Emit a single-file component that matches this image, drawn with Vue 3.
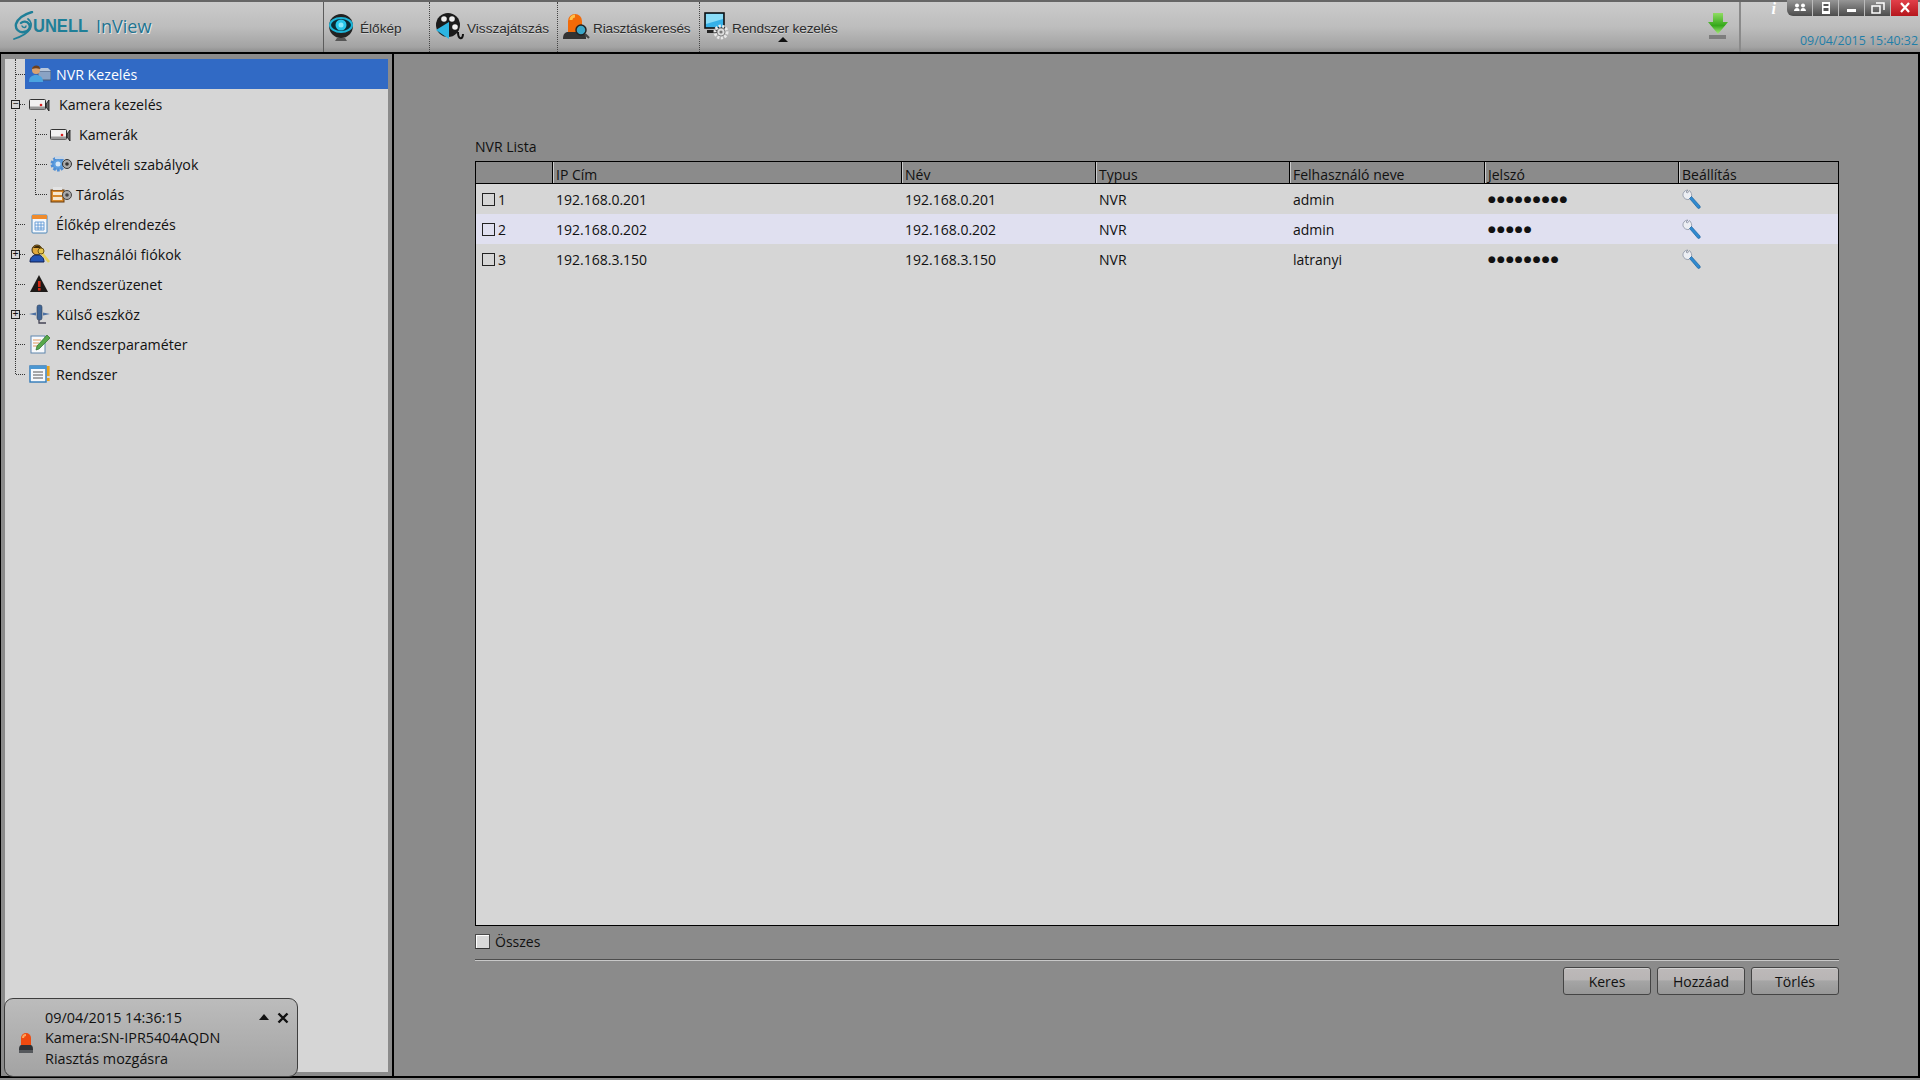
<template>
  <div class="app">
    <header class="topbar">
      <div class="brand">
        <svg class="spiral" viewBox="0 0 22 30" width="22" height="30">
          <g fill="none" stroke="#1f7f98" stroke-linecap="round">
            <path d="M19 1C12 3 5 7 3 13c-1 5 3 9 8 8 5-1 7-5 5-8-2-3-6-3-8-1" stroke-width="2.400"/>
            <path d="M1 28c6-2 13-5 16-10 2-4 1-8-2-10" stroke-width="1.800"/>
            <path d="M9 15c1 2 4 2 4 0" stroke-width="1.400"/>
          </g>
        </svg>
        <span class="unell">UNELL</span>
        <span class="inview">InView</span>
      </div>
      <nav class="nav">
        <div v-for="item in navItems" :key="item.label" class="nav-item" :class="item.cls">
          <svg class="nav-icon" :width="item.w" height="32" :viewBox="`0 0 ${item.w} 32`" v-html="icons[item.icon]"></svg>
          <span>{{ item.label }}</span>
          <i v-if="item.caret" class="nav-caret"></i>
        </div>
      </nav>
      <div class="update">
        <svg width="20" height="27" viewBox="0 0 20 27">
          <defs>
            <linearGradient id="arrow" x1="0" y1="0" x2="0" y2="1">
              <stop offset="0" stop-color="#8fdc62"/>
              <stop offset=".6" stop-color="#35a81a"/>
              <stop offset="1" stop-color="#a6ea7a"/>
            </linearGradient>
          </defs>
          <path d="M5 0h10v9h5L10 21 0 9h5z" fill="url(#arrow)"/>
          <rect x="1" y="22" width="17" height="4" fill="#7d7d7d"/>
        </svg>
      </div>
      <div class="status">
        <div class="window-row">
          <span class="info">i</span>
          <div class="window-btns">
            <button v-for="b in windowBtns" :key="b" class="win-btn" :class="{ close: b === 'close' }">
              <svg width="14" height="12" viewBox="0 0 14 12" v-html="icons[b]"></svg>
            </button>
          </div>
        </div>
        <div class="clock">09/04/2015 15:40:32</div>
      </div>
    </header>

    <div class="body">
      <aside class="side">
        <ul class="tree">
          <li v-for="(row, i) in tree" :key="row.label" class="tree-row" :class="[`lvl${row.level}`, { first: i === 0, last: i === tree.length - 1, sub: row.sub, sublast: row.subLast }]">
            <span v-if="row.expander" class="expander">{{ row.expander }}</span>
            <div class="tree-item" :class="{ selected: row.selected }">
              <svg class="tree-icon" width="22" height="22" viewBox="0 0 22 22" v-html="icons[row.icon]"></svg>
              <span class="tree-label" :style="{ marginLeft: row.gap + 'px' }">{{ row.label }}</span>
            </div>
          </li>
        </ul>
      </aside>

      <main class="main">
        <div class="list-title">NVR Lista</div>
        <div class="table">
          <div class="grid head">
            <div v-for="c in columns" :key="c" class="th">{{ c }}</div>
          </div>
          <div v-for="(r, i) in rows" :key="r.ip" class="grid row" :class="{ alt: i === 1 }">
            <div class="td num"><i class="box"></i>{{ i + 1 }}</div>
            <div class="td">{{ r.ip }}</div>
            <div class="td">{{ r.ip }}</div>
            <div class="td">NVR</div>
            <div class="td">{{ r.user }}</div>
            <div class="td pass">{{ '●'.repeat(r.pass) }}</div>
            <div class="td">
              <svg width="20" height="21" viewBox="0 0 20 21" v-html="icons.wrench"></svg>
            </div>
          </div>
        </div>
        <label class="select-all"><i class="box-all"></i>Összes</label>
        <div class="actions">
          <button class="btn">Keres</button>
          <button class="btn">Hozzáad</button>
          <button class="btn">Törlés</button>
        </div>
      </main>
    </div>

    <div class="alert">
      <svg class="alert-icon" width="16" height="24" viewBox="0 0 16 24" v-html="icons.siren"></svg>
      <div class="alert-text">
        <div>09/04/2015 14:36:15</div>
        <div>Kamera:SN-IPR5404AQDN</div>
        <div>Riasztás mozgásra</div>
      </div>
      <i class="alert-caret"></i>
      <svg class="alert-close" width="12" height="12" viewBox="0 0 12 12">
        <path d="M1.5 1.5l9 9M10.5 1.5l-9 9" stroke="#111" stroke-width="2.4"/>
      </svg>
    </div>
  </div>
</template>

<script setup>
const navItems = [
  { label: 'Élőkép', icon: 'eye', w: 26, cls: 'n1' },
  { label: 'Visszajátszás', icon: 'film', w: 30, cls: 'n2' },
  { label: 'Riasztáskeresés', icon: 'alarm', w: 28, cls: 'n3' },
  { label: 'Rendszer kezelés', icon: 'monitor', w: 26, cls: 'n4', caret: true }
]

const windowBtns = ['users', 'save', 'min', 'restore', 'close']

const tree = [
  { label: 'NVR Kezelés', icon: 'nvr', level: 0, selected: true, gap: 5 },
  { label: 'Kamera kezelés', icon: 'cam', level: 0, expander: '−', gap: 8 },
  { label: 'Kamerák', icon: 'cam', level: 1, sub: true, gap: 7 },
  { label: 'Felvételi szabályok', icon: 'rule', level: 1, sub: true, gap: 4 },
  { label: 'Tárolás', icon: 'disk', level: 1, sub: true, subLast: true, gap: 4 },
  { label: 'Élőkép elrendezés', icon: 'layout', level: 0, gap: 5 },
  { label: 'Felhasználói fiókok', icon: 'users2', level: 0, expander: '+', gap: 5 },
  { label: 'Rendszerüzenet', icon: 'warn', level: 0, gap: 5 },
  { label: 'Külső eszköz', icon: 'plug', level: 0, expander: '+', gap: 5 },
  { label: 'Rendszerparaméter', icon: 'pencil', level: 0, gap: 5 },
  { label: 'Rendszer', icon: 'sys', level: 0, gap: 5 }
]

const columns = ['', 'IP Cím', 'Név', 'Typus', 'Felhasználó neve', 'Jelszó', 'Beállítás']

const rows = [
  { ip: '192.168.0.201', user: 'admin', pass: 9 },
  { ip: '192.168.0.202', user: 'admin', pass: 5 },
  { ip: '192.168.3.150', user: 'latranyi', pass: 8 }
]

const camera = `<rect x="0.500" y="6.500" width="16" height="10" rx="1" fill="#f1f1f1" stroke="#333"/><rect x="1" y="13.500" width="15" height="3" fill="#999"/><circle cx="12" cy="12" r="1.300" fill="#d81e1e"/><path d="M17 11l3-4v11l-3-4z" fill="#666" stroke="#111" stroke-width=".8"/>`

const icons = {
  eye: `<ellipse cx="13" cy="14" rx="12" ry="12" fill="#222"/><ellipse cx="13" cy="13" rx="11" ry="7" fill="#0b2a33" stroke="#1db4d8" stroke-width="2"/><circle cx="13" cy="13" r="5.500" fill="#28c6ea"/><circle cx="13" cy="13" r="2.500" fill="#8ae8fb"/><path d="M9 26h8l2 3H7z" fill="#555"/>`,
  film: `<circle cx="14" cy="13" r="12" fill="#1b1b1b"/><circle cx="10" cy="7" r="2.800" fill="#eee"/><circle cx="18" cy="7" r="2.800" fill="#eee"/><circle cx="21" cy="15" r="2.800" fill="#eee"/><path d="M2 18l13-8v17z" fill="#2db5e2"/><path d="M24 20c0 8 5 8 5 2" fill="none" stroke="#111" stroke-width="2"/>`,
  alarm: `<path d="M6 20V9a7 7 0 0 1 14 0v11z" fill="#f26a08"/><path d="M9 8a4 4 0 0 1 4-4" stroke="#ffc04a" stroke-width="3" fill="none"/><path d="M1 27c0-5 2-7 5-7h14c3 0 4 2 4 7z" fill="#333"/><circle cx="19" cy="18" r="5" fill="#3aa6c8" stroke="#222" stroke-width="1.500"/><path d="M23 22l4 4" stroke="#444" stroke-width="2.200"/>`,
  monitor: `<rect x="1" y="1" width="19" height="15" fill="#36b1e8" stroke="#111" stroke-width="1.600"/><path d="M2 2h17v5L2 12z" fill="#8adcf7"/><path d="M3 18h10v3H3z" fill="#222"/><circle cx="17" cy="20" r="6" fill="none" stroke="#e8e8e8" stroke-width="3" stroke-dasharray="2.200 1.400"/><circle cx="17" cy="20" r="4" fill="#ddd" stroke="#888"/><circle cx="17" cy="20" r="1.600" fill="#777"/>`,
  users: `<circle cx="4" cy="3.500" r="2" fill="#fff"/><circle cx="10" cy="3.500" r="2" fill="#fff"/><path d="M1 9c0-2 1.500-3 3-3s3 1 2.500 3zM7.500 9c0-2 1-3 2.500-3s3 1 3 3z" fill="#fff"/>`,
  save: `<path d="M3 0h8v12H3z" fill="#fff"/><path d="M4.500 2h5v2h-5zM4.500 6h5v3h-5z" fill="#555"/>`,
  min: `<rect x="2" y="7" width="9" height="3" fill="#fff"/>`,
  restore: `<path d="M1 4h8v7H1zM5 1h8v7" fill="none" stroke="#fff" stroke-width="1.500"/>`,
  close: `<path d="M3 1l8 9M11 1l-8 9" stroke="#fff" stroke-width="2.200"/>`,
  nvr: `<rect x="9" y="8" width="13" height="9" fill="#8aa3c4" stroke="#4a5d78"/><path d="M9 8l3-3h7l3 3z" fill="#b8c7db"/><circle cx="7" cy="7" r="4" fill="#d8a272"/><path d="M3 6c0-4 8-5 8 0-3-1-5-1-8 0z" fill="#6b3f1d"/><path d="M0 19c0-5 3-7 7-7s7 2 7 7z" fill="#4aa4e0"/>`,
  cam: camera,
  rule: `<circle cx="8" cy="11" r="6" fill="#5d9fe0" stroke="#4f8ed4" stroke-width="3" stroke-dasharray="2.500 1.300"/><circle cx="8" cy="11" r="2.500" fill="#d6e8f8"/><circle cx="17" cy="11" r="4.500" fill="#aaa" stroke="#333"/><circle cx="17" cy="11" r="1.800" fill="#333"/><path d="M5 3h9v3H5z" fill="#c8d4e2"/>`,
  disk: `<rect x="1" y="7" width="13" height="12" fill="#d8892a" stroke="#6b3c0c"/><rect x="3" y="9" width="9" height="3" fill="#f6e8d0"/><rect x="3" y="14" width="9" height="3" fill="#f6e8d0"/><circle cx="17" cy="12" r="4.500" fill="#aaa" stroke="#444"/><circle cx="17" cy="12" r="1.800" fill="#444"/><path d="M3 4h9v3H3z" fill="#e4e4e4"/>`,
  layout: `<rect x="3" y="2" width="15" height="18" rx="1" fill="#f4f7fb" stroke="#4d86b8"/><rect x="3" y="2" width="15" height="4" fill="#ef8b2c"/><path d="M6 9h9v8H6zM9 9v8M12 9v8M6 12h9M6 15h9" fill="none" stroke="#5f97d6" stroke-width=".9"/>`,
  users2: `<circle cx="8" cy="7" r="5" fill="#e0a83c" stroke="#3d2a08"/><path d="M4 5c2-3 7-3 8 0z" fill="#3d2a08"/><path d="M1 19c0-5 3-7 7-7s7 2 7 7z" fill="#2354b4" stroke="#0f1f52"/><path d="M12 9l8 10" stroke="#e6cf5a" stroke-width="2.600"/><circle cx="12" cy="8" r="3" fill="#e6c44c" stroke="#6b5312"/>`,
  warn: `<path d="M10 2l9 17H1z" fill="#1d1a18"/><rect x="9" y="8" width="2.600" height="6" fill="#d32a14"/><rect x="9" y="15" width="2.600" height="2.500" fill="#d32a14"/>`,
  plug: `<path d="M0 11l7-1.500v3zM14 9.500l7 1.500-7 1.500z" fill="#4d72a4"/><rect x="8" y="2" width="5" height="15" rx="2" fill="#3f6596" stroke="#2b3f5d" stroke-width=".6"/><path d="M10 17v3h7" fill="none" stroke="#445" stroke-width="1.300"/>`,
  pencil: `<rect x="2" y="3" width="14" height="17" fill="#f7f9fc" stroke="#5f86ad"/><path d="M4 7h8M4 10h6M4 13h5" stroke="#e39a5d" stroke-width="1.200"/><path d="M7 17l1-4L18 2l3 3L10 16z" fill="#57a84a" stroke="#2c6d2a" stroke-width=".7"/>`,
  sys: `<rect x="1" y="3" width="16" height="16" fill="#f6f9fc" stroke="#2f79b8" stroke-width="1.400"/><rect x="1" y="3" width="16" height="3" fill="#4b97d2"/><path d="M4 9h10M4 12h10M4 15h10" stroke="#555"/><rect x="18" y="3" width="2.600" height="10" fill="#e8a21c"/><rect x="18" y="15" width="2.600" height="3" fill="#e8a21c"/>`,
  wrench: `<path d="M6 1a5 5 0 0 0-5 6c1 2.500 3.500 4 6 3.500l2.500-2.500c.6-2.500-.2-4.500-2-6.500L5.500 4 4 3z" fill="#eceef3" stroke="#8b93a3" stroke-width=".8"/><path d="M7.500 9.500l2-2 8.500 9.500c1 1.500-.8 3.200-2.200 2.200z" fill="#2f8ad0" stroke="#155a96" stroke-width=".6"/>`,
  siren: `<path d="M3 13V6a5 5 0 0 1 10 0v7z" fill="#ee4a10"/><path d="M5 6a3 3 0 0 1 3-3" stroke="#ffa45a" stroke-width="2" fill="none"/><path d="M1 18c0-4 1-5 3-5h8c2 0 3 1 3 5z" fill="#2f3236"/><rect x="1" y="18" width="14" height="3" fill="#55585c"/>`
}
</script>

<style scoped>
.app {
  width: 1920px;
  height: 1080px;
  display: flex;
  flex-direction: column;
  position: relative;
  overflow: hidden;
  background: #8b8b8b;
  font-family: "Open Sans", "Noto Sans", sans-serif;
  font-size: 14px;
  color: #111;
}

/* top bar */
.topbar {
  height: 52px;
  flex: none;
  display: flex;
  box-sizing: border-box;
  border-top: 2px solid #666;
  background: linear-gradient(#cbcbcb, #bdbdbd 50%, #a3a3a3 90%, #8e8e8e);
  font-family: "Liberation Sans", sans-serif;
  color: #2c2c2c;
}
.brand {
  width: 324px;
  flex: none;
  box-sizing: border-box;
  display: flex;
  align-items: center;
  padding: 0 0 2px 13px;
  border-right: 1px solid #5c5c5c;
}
.unell {
  width: 55px;
  flex: none;
  font-size: 19px;
  margin-left: -2px;
  color: #1f7f98;
  font-weight: 700;
  transform: scaleX(.87);
  transform-origin: left;
}
.inview {
  font-size: 18px;
  color: #1f7490;
  margin-left: 8px;
  font-family: "Open Sans", sans-serif;
  text-shadow: 1px 1px 0 #e6e6e6;
}
.nav {
  flex: 1;
  display: flex;
}
.nav-item {
  position: relative;
  display: flex;
  align-items: center;
  box-sizing: border-box;
  font-size: 13.6px;
  text-shadow: 0 1px 0 #d2d2d2;
  padding-top: 2px;
  padding-left: 4px;
}
.nav-item.n1 { width: 105px; gap: 6px; }
.nav-item.n2, .nav-item.n3, .nav-item.n4 { border-left: 1px dotted #444; }
.nav-item.n2 { width: 128px; gap: 3px; }
.nav-item.n3 { width: 142px; gap: 3px; }
.nav-item.n3 span { letter-spacing: -0.15px; }
.nav-item.n4 { gap: 2px; }
.nav-item.n4 span { letter-spacing: -0.15px; }
.nav-caret {
  position: absolute;
  left: 78px;
  top: 35px;
  border: 5px solid transparent;
  border-top: 0;
  border-bottom: 5px solid #111;
}
.update {
  width: 72px;
  flex: none;
  box-sizing: border-box;
  padding: 11px 0 0 41px;
}
.status {
  width: 181px;
  flex: none;
  border-left: 2px solid #8a8a8a;
  box-sizing: border-box;
}
.window-row {
  display: flex;
  justify-content: flex-end;
  padding-right: 2px;
  margin-top: -2px;
}
.info {
  font-family: "Liberation Serif", serif;
  font-style: italic;
  font-weight: 700;
  font-size: 16px;
  line-height: 18px;
  color: #fff;
  margin-right: 11px;
}
.window-btns {
  display: flex;
  height: 16px;
  border-radius: 0 0 0 6px;
  overflow: hidden;
}
.win-btn {
  width: 26px;
  height: 16px;
  padding: 0;
  border: 0;
  border-right: 1px solid #bbb;
  background: linear-gradient(#969696, #4b4b4b);
  display: flex;
  align-items: center;
  justify-content: center;
}
.win-btn.close {
  width: 27px;
  border-right: 0;
  background: linear-gradient(#e2404a, #b5161c);
}
.clock {
  text-align: right;
  padding: 15px 2px 0 0;
  font-family: "Open Sans", sans-serif;
  font-size: 12.4px;
  line-height: 16px;
  color: #1f7ea8;
}

/* body */
.body {
  flex: 1;
  min-height: 0;
  display: flex;
  border-top: 2px solid #000;
  border-bottom: 2px solid #000;
  margin-bottom: 2px;
  border-left: 1px solid #000;
  border-right: 2px solid #000;
  background: #8b8b8b;
}
.side {
  width: 393px;
  flex: none;
  box-sizing: border-box;
  border-right: 2px solid #000;
  padding: 5px 4px 4px 4px;
  margin-right: 2px;
  display: flex;
}

/* tree */
.tree {
  flex: 1;
  margin: 0;
  padding: 0;
  list-style: none;
  background: #d6d6d6;
  position: relative;
}
.tree-row {
  position: relative;
  height: 30px;
  box-sizing: border-box;
  display: flex;
  align-items: center;
  padding-left: 20px;
}
.tree-row::before {
  content: "";
  position: absolute;
  left: 10px;
  top: 0;
  bottom: 0;
  border-left: 1px dotted #333;
}
.tree-row.last::before { bottom: 15px; }
.tree-row.first::after,
.tree-row.lvl0:not(.first)::after {
  content: "";
  position: absolute;
  left: 11px;
  top: 15px;
  width: 9px;
  border-top: 1px dotted #333;
}
.tree-row.sub { padding-left: 41px; }
.tree-row.sub::after {
  content: "";
  position: absolute;
  left: 30px;
  top: 0;
  bottom: 0;
  width: 11px;
  border-left: 1px dotted #333;
  background: repeating-linear-gradient(90deg, #333 0 1px, transparent 1px 2px) 0 15px / 100% 1px no-repeat;
}
.tree-row.sublast::after { bottom: 14px; }
.expander {
  position: absolute;
  left: 6px;
  top: 11px;
  width: 7px;
  height: 7px;
  border: 1px solid #222;
  background: #d6d6d6;
  font: 10px/7px "Liberation Mono", monospace;
  text-align: center;
  color: #111;
  z-index: 1;
}
.tree-item {
  flex: 1;
  height: 30px;
  display: flex;
  align-items: center;
  padding-left: 4px;
}
.tree-item.selected {
  background: #316ac5;
  color: #fff;
}
.tree-icon { flex: none; }
.tree-label { font-size: 14.2px; }

/* main */
.main {
  flex: 1;
  min-width: 0;
  display: flex;
  flex-direction: column;
  padding: 82px 79px 81px 79px;
}
.list-title {
  height: 25px;
  line-height: 22px;
}
.table {
  flex: 1;
  border: 1px solid #000;
  background: #d6d6d6;
}
.grid {
  display: grid;
  grid-template-columns: 77px 349px 194px 194px 195px 194px 1fr;
}
.head {
  height: 21px;
  background: #8b8b8b;
  border-bottom: 1px solid #000;
}
.th {
  padding-left: 3px;
  line-height: 25px;
  height: 21px;
  overflow: hidden;
  border-right: 1px solid #000;
  box-shadow: 1px 0 0 #ccc;
}
.th:last-child { border-right: 0; box-shadow: none; }
.row {
  height: 30px;
  align-items: center;
}
.row.alt { background: #e0e0f0; }
.td { padding-left: 3px; white-space: nowrap; }
.td svg { display: block; }
.num {
  display: flex;
  align-items: center;
  padding-left: 6px;
  gap: 3px;
}
.box {
  width: 11px;
  height: 11px;
  border: 1px solid #222;
}
.pass {
  font-family: "DejaVu Sans", sans-serif;
  font-size: 9px;
  letter-spacing: 1.1px;
}
.select-all {
  display: flex;
  align-items: center;
  box-sizing: content-box;
  height: 31px;
  padding-bottom: 2px;
  gap: 5px;
  border-bottom: 1px solid #4d4d4d;
  box-shadow: 0 1px 0 #c8c8c8;
}
.box-all {
  width: 13px;
  height: 13px;
  border: 1px solid #4a4a4a;
  border-bottom-color: #333;
  background: #d9d9d9;
  box-shadow: inset 1px 1px 0 #fff;
}
.actions {
  display: flex;
  justify-content: flex-end;
  gap: 6px;
  padding-top: 7px;
}
.btn {
  width: 88px;
  height: 28px;
  padding: 0;
  border: 1px solid #444;
  border-radius: 3px;
  background: linear-gradient(#bdb9b9 0, #b8b5b5 45%, #a5a5a5 50%, #979797 100%);
  box-shadow: inset 0 1px 0 #d0d0d0;
  font: inherit;
  color: #111;
}

/* alarm popup */
.alert {
  position: absolute;
  left: 4px;
  top: 998px;
  width: 294px;
  height: 79px;
  box-sizing: border-box;
  border: 1px solid #3e3e3e;
  border-radius: 9px;
  background: linear-gradient(#bcbcbc, #a3a3a3);
  display: flex;
  align-items: center;
}
.alert-icon {
  margin: 12px 0 0 13px;
  flex: none;
}
.alert-text {
  margin-left: 11px;
  padding-top: 2px;
  font-size: 14.4px;
  line-height: 20.5px;
}
.alert-caret {
  position: absolute;
  left: 254px;
  top: 15px;
  border: 5px solid transparent;
  border-top: 0;
  border-bottom: 6px solid #111;
}
.alert-close {
  position: absolute;
  left: 272px;
  top: 13px;
}
</style>

<style>
html, body { margin: 0; overflow: hidden; }
</style>
